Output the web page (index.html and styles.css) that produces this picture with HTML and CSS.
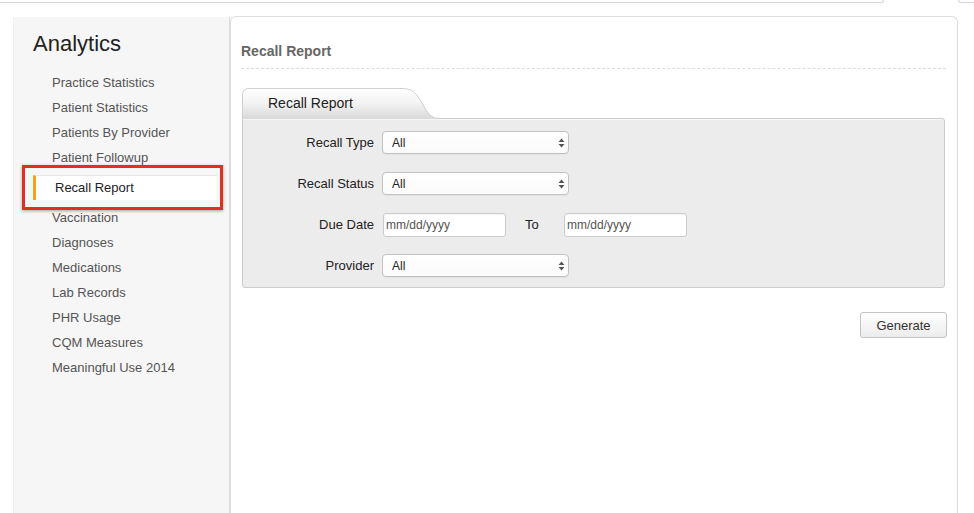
FILE: index.html
```html
<!DOCTYPE html>
<html>
<head>
<meta charset="utf-8">
<title>Recall Report</title>
<link rel="stylesheet" href="styles.css">
</head>
<body>
<div class="topbar">
  <div class="topbar-left"></div>
  <div class="topbar-right"></div>
</div>
<div class="layout">
  <aside class="sidebar">
    <h1 class="side-title">Analytics</h1>
    <nav class="side-nav">
      <a class="nav-item">Practice Statistics</a>
      <a class="nav-item">Patient Statistics</a>
      <a class="nav-item">Patients By Provider</a>
      <a class="nav-item">Patient Followup</a>
      <a class="nav-item active">Recall Report<span class="highlight"></span></a>
      <a class="nav-item">Vaccination</a>
      <a class="nav-item">Diagnoses</a>
      <a class="nav-item">Medications</a>
      <a class="nav-item">Lab Records</a>
      <a class="nav-item">PHR Usage</a>
      <a class="nav-item">CQM Measures</a>
      <a class="nav-item">Meaningful Use 2014</a>
    </nav>
  </aside>
  <main class="main">
    <h2 class="page-title">Recall Report</h2>
    <div class="tab">
      <svg class="tab-bg" width="198" height="31" viewBox="0 0 198 31">
        <defs>
          <linearGradient id="tg" x1="0" y1="0" x2="0" y2="1">
            <stop offset="0" stop-color="#ffffff"/>
            <stop offset="0.45" stop-color="#f4f4f4"/>
            <stop offset="1" stop-color="#d9d9d9"/>
          </linearGradient>
        </defs>
        <path d="M0.5,31 V7 Q0.5,0.5 7,0.5 H160 C171,0.5 174,5 180,15 C186,26 189,30.5 198,30.5 V31 Z" fill="url(#tg)" stroke="none"/>
        <path d="M0.5,31 V7 Q0.5,0.5 7,0.5 H160 C171,0.5 174,5 180,15 C186,26 189,30.5 198,30.5" fill="none" stroke="#cfcfcf" stroke-width="1"/>
      </svg>
      <span class="tab-label">Recall Report</span>
    </div>
    <div class="form-box">
      <div class="form-grid">
        <label class="form-label">Recall Type</label>
        <div class="sel">
          <select class="select"><option>All</option></select>
          <svg class="sel-arrow" width="7" height="10" viewBox="0 0 7 10"><path d="M3.5,0.5 L6.5,4 H0.5 Z M0.5,6 H6.5 L3.5,9.5 Z" fill="#555"/></svg>
        </div>

        <label class="form-label">Recall Status</label>
        <div class="sel">
          <select class="select"><option>All</option></select>
          <svg class="sel-arrow" width="7" height="10" viewBox="0 0 7 10"><path d="M3.5,0.5 L6.5,4 H0.5 Z M0.5,6 H6.5 L3.5,9.5 Z" fill="#555"/></svg>
        </div>

        <label class="form-label">Due Date</label>
        <div class="date-row">
          <input class="date" type="text" placeholder="mm/dd/yyyy">
          <span class="to">To</span>
          <input class="date" type="text" placeholder="mm/dd/yyyy">
        </div>

        <label class="form-label">Provider</label>
        <div class="sel">
          <select class="select"><option>All</option></select>
          <svg class="sel-arrow" width="7" height="10" viewBox="0 0 7 10"><path d="M3.5,0.5 L6.5,4 H0.5 Z M0.5,6 H6.5 L3.5,9.5 Z" fill="#555"/></svg>
        </div>
      </div>
    </div>
    <div class="actions">
      <button class="btn" type="button">Generate</button>
    </div>
  </main>
</div>
</body>
</html>
```

FILE: styles.css
```css
html, body {
  margin: 0;
  padding: 0;
  background: #ffffff;
  height: 513px;
  overflow: hidden;
}
body {
  font-family: "Liberation Sans", Arial, Helvetica, sans-serif;
  color: #222;
}

.topbar {
  display: flex;
  height: 3px;
}
.topbar-left {
  width: 883px;
  height: 2px;
  border-bottom: 1px solid #d6d6d6;
  border-right: 1px solid #d6d6d6;
  border-bottom-right-radius: 3px;
}
.topbar-right {
  margin-left: 74px;
  flex: 1;
  height: 2px;
  border-bottom: 1px solid #d6d6d6;
  border-left: 1px solid #d6d6d6;
  border-bottom-left-radius: 3px;
}

.layout {
  display: flex;
  align-items: stretch;
  padding-left: 13px;
  margin-top: 13px;
  height: 497px;
}

.sidebar {
  width: 216px;
  margin-top: 1px;
  background: #f6f6f6;
  border-right: 1px solid #dcdcdc;
  box-shadow: inset 1px 0 0 #efefef;
  padding-top: 14px;
  box-sizing: content-box;
}
.side-title {
  margin: 0 0 13px 20px;
  font-size: 22px;
  line-height: 26px;
  font-weight: normal;
  color: #222;
}
.side-nav {
  display: flex;
  flex-direction: column;
}
.nav-item {
  display: block;
  font-size: 13px;
  line-height: 25px;
  color: #555;
  padding-left: 39px;
  text-decoration: none;
  cursor: pointer;
}
.nav-item.active {
  position: relative;
  margin: 5px 12px 5px 20px;
  padding-left: 19px;
  background: #ffffff;
  border-left: 3px solid #f5a220;
  border-top: 1px solid #e6e6e6;
  line-height: 24px;
  color: #222;
}
.highlight {
  position: absolute;
  left: -14px;
  top: -11px;
  right: -6px;
  bottom: -10px;
  border: 3px solid #e3301c;
  box-shadow: 0 1px 3px rgba(0, 0, 0, 0.35);
}

.main {
  width: 705px;
  background: #ffffff;
  border: 1px solid #dddddd;
  border-bottom: none;
  border-radius: 6px 6px 0 0;
  padding: 25px 11px 0 10px;
}
.page-title {
  margin: 0;
  font-size: 14px;
  line-height: 18px;
  font-weight: bold;
  color: #666;
  padding-bottom: 8px;
  border-bottom: 1px dashed #dcdcdc;
}

.tab {
  position: relative;
  margin: 19px 0 0 1px;
  width: 198px;
  height: 30px;
}
.tab-bg {
  position: absolute;
  left: 0;
  top: 0;
}
.tab-label {
  position: relative;
  display: block;
  padding-left: 26px;
  font-size: 14px;
  line-height: 30px;
  color: #222;
}

.form-box {
  margin-left: 1px;
  width: 701px;
  background: #ececec;
  border: 1px solid #cccccc;
  border-radius: 0 3px 3px 3px;
  box-shadow: inset 0 1px 0 #f7f7f7;
  padding: 12px 0 10px;
}
.form-grid {
  display: grid;
  grid-template-columns: 131px auto;
  column-gap: 8px;
  row-gap: 18px;
  align-items: center;
}
.form-label {
  text-align: right;
  font-size: 13px;
  color: #222;
  line-height: 23px;
}

.sel {
  position: relative;
  width: 187px;
  height: 23px;
}
.select {
  -webkit-appearance: none;
  appearance: none;
  width: 187px;
  height: 23px;
  margin: 0;
  padding: 0 0 0 9px;
  font-family: "Liberation Sans", Arial, sans-serif;
  font-size: 12px;
  color: #222;
  background: linear-gradient(#ffffff, #fbfbfb);
  border: 1px solid #c2c2c2;
  border-radius: 4px;
  box-shadow: 0 1px 0 rgba(0,0,0,0.03);
  outline: none;
}
.sel-arrow {
  position: absolute;
  right: 4px;
  top: 7px;
  pointer-events: none;
}

.date-row {
  display: flex;
  align-items: center;
  height: 23px;
}
.date {
  box-sizing: border-box;
  width: 123px;
  height: 24px;
  margin: 0 0 0 1px;
  padding: 0 0 0 2px;
  font-family: "Liberation Sans", Arial, sans-serif;
  font-size: 12px;
  color: #222;
  background: #ffffff;
  border: 1px solid #cbcbcb;
  border-radius: 3px;
  box-shadow: inset 0 1px 1px rgba(0,0,0,0.05);
  outline: none;
}
.date::placeholder {
  color: #555;
}
.to {
  width: 38px;
  padding-left: 19px;
  font-size: 13px;
  color: #222;
}

.actions {
  display: flex;
  justify-content: flex-end;
  margin-top: 24px;
  margin-right: -1px;
}
.btn {
  width: 87px;
  height: 26px;
  font-family: "Liberation Sans", Arial, sans-serif;
  font-size: 13px;
  color: #333;
  background: linear-gradient(#ffffff, #ececec);
  border: 1px solid #c4c4c4;
  border-radius: 3px;
  padding: 0;
  cursor: pointer;
}
```
